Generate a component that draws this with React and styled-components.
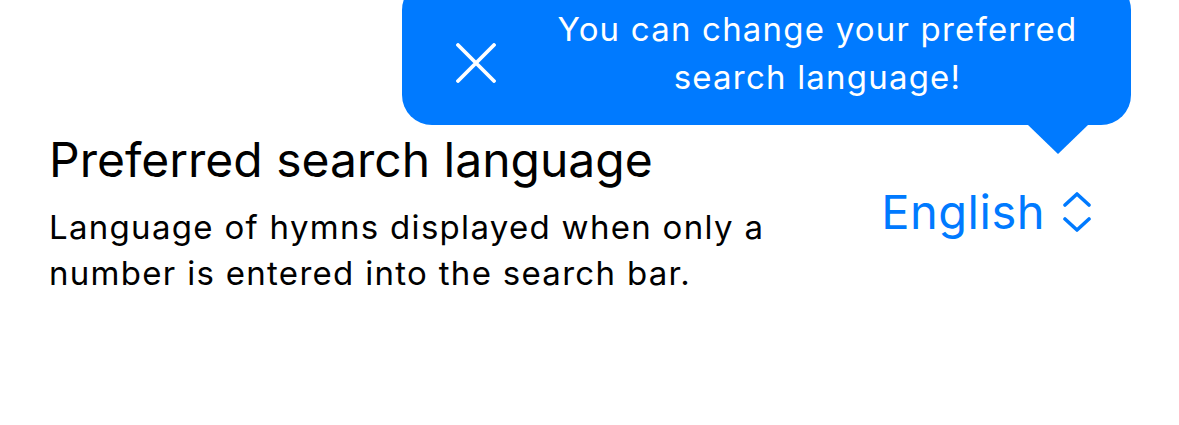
import React from 'react';
import styled, { createGlobalStyle } from 'styled-components';

const GlobalStyle = createGlobalStyle`
  html, body {
    margin: 0;
    padding: 0;
    background: #ffffff;
    font-family: Inter, "Noto Sans", "Liberation Sans", sans-serif;
    -webkit-font-smoothing: antialiased;
  }
`;

const Page = styled.div`
  position: relative;
  width: 1179px;
  height: 425px;
  overflow: hidden;
  padding-top: 131px;
  box-sizing: border-box;
`;

const SettingRow = styled.div`
  display: flex;
  align-items: center;
  justify-content: space-between;
  padding: 0 88px 0 49px;
`;

const TextColumn = styled.div`
  display: flex;
  flex-direction: column;
  gap: 15px;
`;

const Title = styled.div`
  font-size: 48px;
  line-height: 58px;
  color: #000000;
`;

const Description = styled.div`
  font-size: 33px;
  line-height: 46px;
  letter-spacing: 1.3px;
  color: #000000;
  width: 740px;
`;

const Picker = styled.button`
  display: flex;
  align-items: center;
  gap: 18px;
  background: none;
  border: none;
  padding: 0;
  margin-top: -4px;
  font-family: inherit;
  font-size: 47px;
  line-height: 56px;
  letter-spacing: 0.5px;
  color: #007aff;
  cursor: pointer;
`;

/* coach mark over the row */
const Tooltip = styled.div`
  position: absolute;
  left: 402px;
  top: -20px;
  width: 729px;
  height: 145px;
  border-radius: 30px;
  background: #007aff;
  display: flex;
  align-items: center;
  box-sizing: border-box;
  padding: 0 32px 0 54px;

  &::after {
    content: '';
    position: absolute;
    left: 626px;
    top: 100%;
    border-left: 30px solid transparent;
    border-right: 30px solid transparent;
    border-top: 29px solid #007aff;
  }
`;

const CloseButton = styled.button`
  display: flex;
  background: none;
  border: none;
  padding: 0;
  margin-top: 20px;
  cursor: pointer;
`;

const Message = styled.div`
  flex: 1;
  text-align: center;
  color: #ffffff;
  font-size: 33px;
  line-height: 48px;
  letter-spacing: 1.2px;
  padding-left: 40px;
`;

const CloseIcon = () => (
  <svg width="40" height="40" viewBox="0 0 40 40" fill="none">
    <path d="M2 2 L38 38 M38 2 L2 38" stroke="#ffffff" strokeWidth="3.8" strokeLinecap="round" />
  </svg>
);

const UpDownIcon = () => (
  <svg width="28" height="40" viewBox="0 0 28 40" fill="none">
    <path
      d="M2 13 L14 2 L26 13 M2 27 L14 38 L26 27"
      stroke="#007aff"
      strokeWidth="3.6"
      strokeLinecap="round"
      strokeLinejoin="round"
    />
  </svg>
);

const App = () => {
  return (
    <Page>
      <GlobalStyle />
      <SettingRow>
        <TextColumn>
          <Title>Preferred search language</Title>
          <Description>
            Language of hymns displayed when only a number is entered into the search bar.
          </Description>
        </TextColumn>
        <Picker>
          English
          <UpDownIcon />
        </Picker>
      </SettingRow>
      <Tooltip>
        <CloseButton>
          <CloseIcon />
        </CloseButton>
        <Message>You can change your preferred search language!</Message>
      </Tooltip>
    </Page>
  );
};

export default App;
